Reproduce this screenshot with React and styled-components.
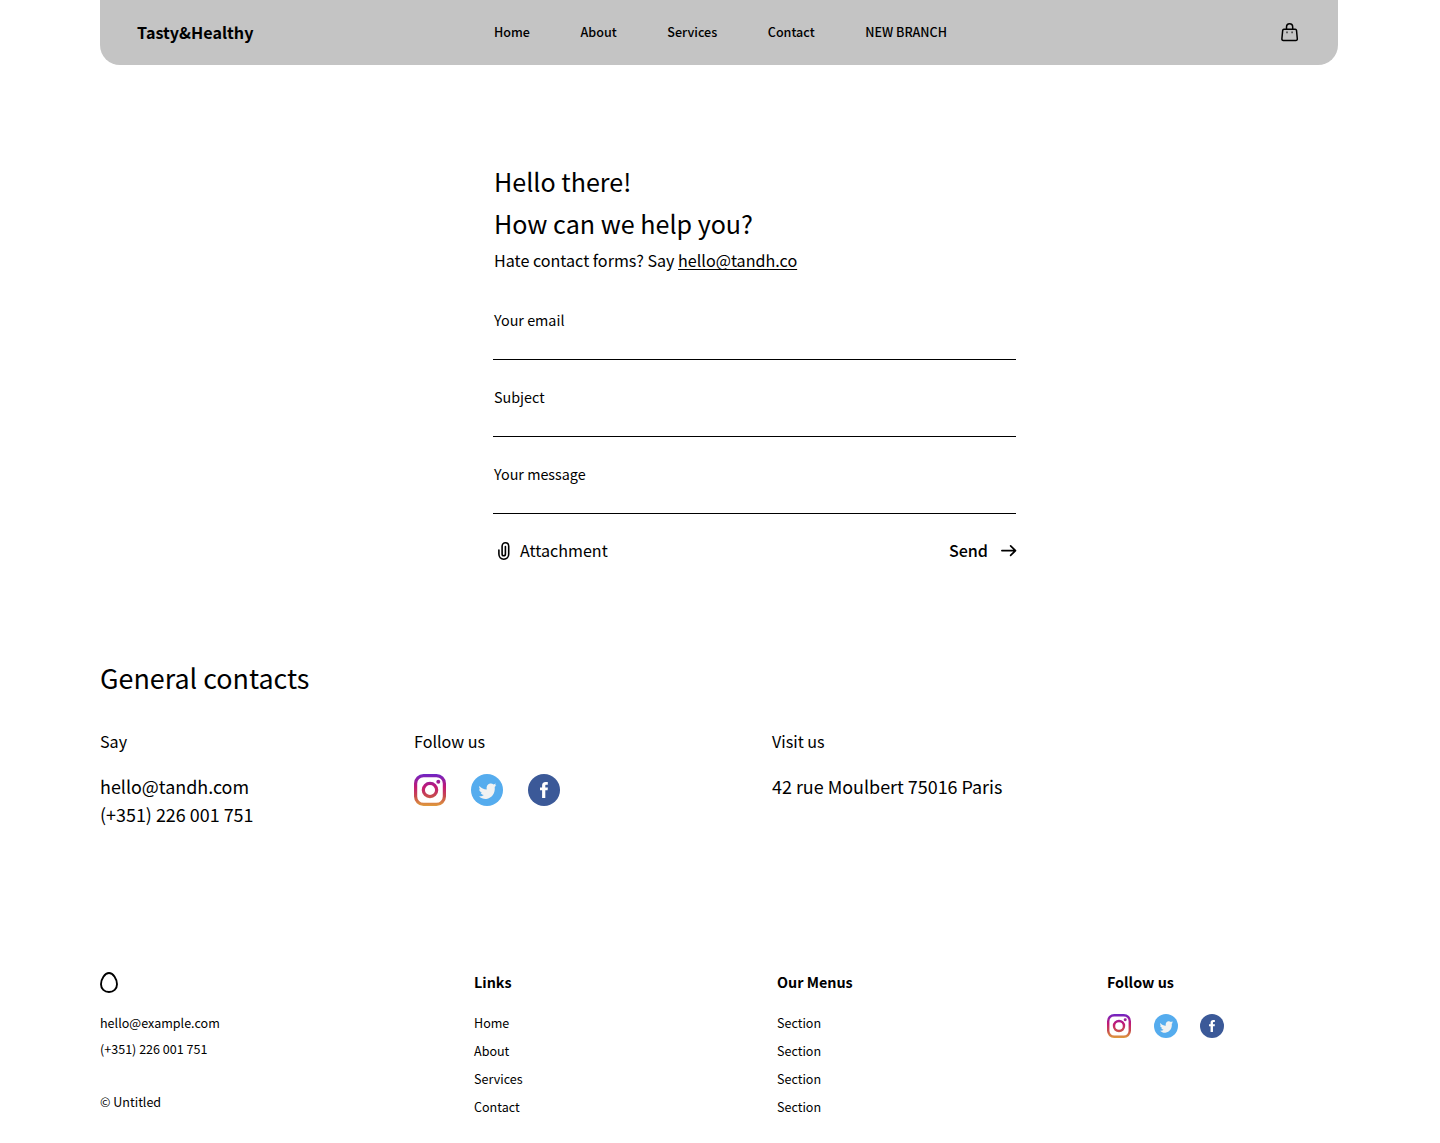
import React, { useId } from 'react';
import styled, { createGlobalStyle } from 'styled-components';

const GlobalStyle = createGlobalStyle`
  *, *::before, *::after { box-sizing: border-box; }
  body {
    margin: 0;
    background: #fff;
    color: #000;
    font-family: "Noto Sans CJK SC", "Noto Sans", sans-serif;
  }
  a { color: inherit; text-decoration: none; }
  svg { display: block; flex: none; }
`;

const Page = styled.div`
  width: 1440px;
  height: 1143px;
  padding: 0 102px 0 100px;
  overflow: hidden;
`;

const Header = styled.header`
  display: grid;
  grid-template-columns: 357px 1fr auto;
  align-items: center;
  height: 65px;
  padding: 0 39px 0 37px;
  background: #c4c4c4;
  border-radius: 0 0 20px 20px;
`;

const Brand = styled.a`
  padding-bottom: 2px;
  font-size: 16.15px;
  font-weight: 700;
  line-height: 24px;
`;

const Nav = styled.nav`
  display: flex;
  gap: 50.6px;
`;

const NavLink = styled.a`
  font-size: 12.55px;
  font-weight: 500;
  line-height: 22px;
  padding-bottom: 1px;
`;

const ContactSection = styled.main`
  width: 523px;
  margin: 95px 0 0 393px;
`;

const Greeting = styled.h1`
  margin: 0;
  padding-left: 1px;
  font-size: 25.1px;
  font-weight: 400;
  line-height: 42px;
`;

const Hint = styled.p`
  margin: 2px 0 0;
  padding-left: 1px;
  font-size: 16.13px;
  line-height: 28px;
`;

const MailLink = styled.a`
  && {
    text-decoration: underline;
    text-decoration-thickness: 1px;
    text-underline-offset: 2px;
    text-decoration-skip-ink: none;
  }
`;

const Form = styled.form`
  margin-top: 9px;
`;

const Field = styled.label`
  display: flex;
  flex-direction: column;
  height: 77px;
  padding-top: 25px;
  border-bottom: 1px solid #000;
`;

const FieldName = styled.span`
  padding-left: 1px;
  font-size: 14.35px;
  line-height: 24px;
`;

const FieldInput = styled.input`
  height: 27px;
  padding: 0 1px;
  border: 0;
  outline: 0;
  background: transparent;
  font: inherit;
  font-size: 14.35px;
`;

const Actions = styled.div`
  display: flex;
  align-items: center;
  justify-content: space-between;
  margin-top: 24px;
`;

const ActionButton = styled.button`
  display: flex;
  align-items: center;
  gap: ${(p) => p.$gap}px;
  padding: 0 0 0 ${(p) => p.$inset || 0}px;
  border: 0;
  background: none;
  color: inherit;
  font-family: inherit;
  font-size: 16.13px;
  font-weight: ${(p) => (p.$strong ? 500 : 400)};
  line-height: 24px;

  svg { margin-top: 1px; }
`;

const General = styled.section`
  margin-top: 94px;
`;

const SectionTitle = styled.h2`
  margin: 0 0 27px;
  font-size: 26.88px;
  font-weight: 400;
  line-height: 44px;
`;

const ContactGrid = styled.div`
  display: grid;
  grid-template-columns: 314px 358px 1fr;
`;

const ColumnLabel = styled.h3`
  margin: 0 0 17px;
  font-size: 16.13px;
  font-weight: 400;
  line-height: 28px;
`;

const Detail = styled.p`
  margin: 0;
  font-size: 17.93px;
  line-height: 28px;
`;

const Socials = styled.div`
  display: flex;
  gap: ${(p) => p.$gap}px;
  padding-top: ${(p) => p.$top}px;
`;

const Footer = styled.footer`
  display: grid;
  grid-template-columns: 374px 303px 330px 1fr;
  margin-top: 142px;
`;

const FooterTitle = styled.h4`
  margin: 0 0 15px;
  font-size: 14.35px;
  font-weight: 700;
  line-height: 24px;
`;

const LogoSlot = styled.div`
  padding: 2px 0 17px;
`;

const FooterText = styled.p`
  margin: ${(p) => p.$top || 0}px 0 0;
  font-size: 12.55px;
  line-height: 26px;
`;

const LinkList = styled.ul`
  margin: 0;
  padding: 0;
  list-style: none;
  font-size: 12.55px;
  line-height: 28px;
`;

const BagIcon = () => (
  <svg width="18" height="19" viewBox="0 0 18 19" fill="none" stroke="#000">
    <path d="M2.9 6.2h11.4c.7 0 1.1.4 1.2 1.1l.8 8.5c.1 1-.5 1.6-1.4 1.6H2.3c-1 0-1.5-.6-1.4-1.6l.8-8.5c.1-.7.5-1.1 1.2-1.1z" strokeWidth="1.5" />
    <path d="M5.5 6V4.2C5.5 2.1 6.7.8 8.6.8s3.1 1.3 3.1 3.4V6" strokeWidth="1.5" />
    <path d="M5.2 9.4h1.6M10.3 9.4h1.6" stroke="#444" strokeWidth="1.6" />
  </svg>
);

const ClipIcon = () => (
  <svg width="12" height="18" viewBox="0 0 12 18" fill="none" stroke="#000" strokeWidth="1.6" strokeLinecap="round">
    <path d="M.9 8v4.1c0 2.9 2 5.1 4.9 5.1s4.9-2.2 4.9-5.1V4.3C10.7 2.2 9.3.8 7.4.8S4.1 2.2 4.1 4.3v7.6c0 1.1.6 1.8 1.65 1.8s1.65-.7 1.65-1.8V4.6" />
  </svg>
);

const ArrowIcon = () => (
  <svg width="15" height="12" viewBox="0 0 15 12" fill="none" stroke="#000" strokeWidth="1.7" strokeLinecap="round" strokeLinejoin="round" overflow="visible">
    <path d="M.9 5.6h13.4M9.6.8l4.900 4.800-4.900 4.800" />
  </svg>
);

const EggIcon = () => (
  <svg width="18" height="21" viewBox="0 0 18 21" fill="none" stroke="#000" strokeWidth="1.9">
    <path d="M9 1C4.800 1 1 7.300 1 12.200 1 16.900 4.500 20 9 20s8-3.100 8-7.800C17 7.300 13.200 1 9 1z" />
  </svg>
);

const InstagramIcon = ({ size }) => {
  const id = useId();
  return (
    <svg width={size} height={size} viewBox="0 0 551 551">
      <linearGradient id={id} gradientUnits="userSpaceOnUse" x1="275.5" y1="549.7" x2="275.5" y2="4.6">
        <stop offset="0" stopColor="#e09b3d" />
        <stop offset=".3" stopColor="#c74c4d" />
        <stop offset=".6" stopColor="#c21975" />
        <stop offset="1" stopColor="#7024c4" />
      </linearGradient>
      <rect x="27.7" y="27.7" width="495.6" height="495.6" rx="136.5" fill="none" stroke={`url(#${id})`} strokeWidth="55.4" />
      <circle cx="275.5" cy="275.5" r="114.8" fill="none" stroke={`url(#${id})`} strokeWidth="55.4" />
      <circle cx="418.3" cy="134.1" r="34.2" fill={`url(#${id})`} />
    </svg>
  );
};

const TwitterIcon = ({ size }) => (
  <svg width={size} height={size} viewBox="0 0 32 32">
    <circle cx="16" cy="16" r="16" fill="#55acee" />
    <path fill="#f1f2f2" d="M8.400 12.100c2 2.300 4.300 3.400 7.300 3.500-.6-3.100.8-5.500 3.300-6 1.400-.3 2.600.1 3.500.9l2.500-.9-1 1.700 1.300-.1-1.600 1.900c.8 5.900-2.900 11.300-8.400 11.800-2.800.2-5.500-.8-7.200-2.700 2 .2 3.500-.2 4.700-1.300-1.600-.2-2.700-1-3.200-2.200l1.500-.1c-1.800-.7-2.900-1.800-3-3.400l1.400.4c-1.200-1-1.600-2.200-1.100-3.500z" />
  </svg>
);

const FacebookIcon = ({ size }) => (
  <svg width={size} height={size} viewBox="0 0 32 32">
    <circle cx="16" cy="16" r="16" fill="#3b5998" />
    <path fill="#fff" d="M19.600 16.300h-2.300V24h-3.200v-7.700H12v-2.700h2.100v-1.900c0-2.200 1.200-3.600 3.500-3.600h2.200v2.700h-1.500c-.8 0-1 .3-1 1v1.800h2.600z" />
  </svg>
);

const SocialIcons = ({ size, gap, top }) => (
  <Socials $gap={gap} $top={top}>
    <a href="#instagram" aria-label="Instagram"><InstagramIcon size={size} /></a>
    <a href="#twitter" aria-label="Twitter"><TwitterIcon size={size} /></a>
    <a href="#facebook" aria-label="Facebook"><FacebookIcon size={size} /></a>
  </Socials>
);

const NAV = ['Home', 'About', 'Services', 'Contact', 'NEW BRANCH'];
const FIELDS = ['Your email', 'Subject', 'Your message'];
const LINKS = ['Home', 'About', 'Services', 'Contact'];
const MENUS = ['Section', 'Section', 'Section', 'Section'];

export default function App() {
  return (
    <>
      <GlobalStyle />
      <Page>
        <Header>
          <Brand href="#">Tasty&amp;Healthy</Brand>
          <Nav>
            {NAV.map((n) => <NavLink key={n} href="#">{n}</NavLink>)}
          </Nav>
          <BagIcon />
        </Header>

        <ContactSection>
          <Greeting>Hello there!<br />How can we help you?</Greeting>
          <Hint>Hate contact forms? Say <MailLink href="#mail">hello@tandh.co</MailLink></Hint>
          <Form>
            {FIELDS.map((f) => (
              <Field key={f}>
                <FieldName>{f}</FieldName>
                <FieldInput />
              </Field>
            ))}
            <Actions>
              <ActionButton type="button" $gap={10} $inset={5}><ClipIcon />Attachment</ActionButton>
              <ActionButton type="button" $gap={13} $strong>Send<ArrowIcon /></ActionButton>
            </Actions>
          </Form>
        </ContactSection>

        <General>
          <SectionTitle>General contacts</SectionTitle>
          <ContactGrid>
            <div>
              <ColumnLabel>Say</ColumnLabel>
              <Detail>hello@tandh.com</Detail>
              <Detail>(+351) 226 001 751</Detail>
            </div>
            <div>
              <ColumnLabel>Follow us</ColumnLabel>
              <SocialIcons size={32} gap={25} top={2} />
            </div>
            <div>
              <ColumnLabel>Visit us</ColumnLabel>
              <Detail>42 rue Moulbert 75016 Paris</Detail>
            </div>
          </ContactGrid>
        </General>

        <Footer>
          <div>
            <LogoSlot><EggIcon /></LogoSlot>
            <FooterText>hello@example.com</FooterText>
            <FooterText>(+351) 226 001 751</FooterText>
            <FooterText $top={27}>© Untitled</FooterText>
          </div>
          <div>
            <FooterTitle>Links</FooterTitle>
            <LinkList>{LINKS.map((l) => <li key={l}><a href="#">{l}</a></li>)}</LinkList>
          </div>
          <div>
            <FooterTitle>Our Menus</FooterTitle>
            <LinkList>{MENUS.map((l, i) => <li key={i}><a href="#">{l}</a></li>)}</LinkList>
          </div>
          <div>
            <FooterTitle>Follow us</FooterTitle>
            <SocialIcons size={24} gap={22.5} top={5} />
          </div>
        </Footer>
      </Page>
    </>
  );
}
